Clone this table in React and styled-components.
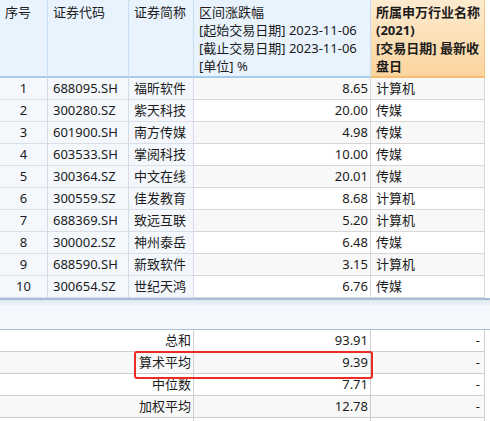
import React from 'react';
import styled, { createGlobalStyle, css } from 'styled-components';

const rows = [
  ['1', '688095.SH', '福昕软件', '8.65', '计算机'],
  ['2', '300280.SZ', '紫天科技', '20.00', '传媒'],
  ['3', '601900.SH', '南方传媒', '4.98', '传媒'],
  ['4', '603533.SH', '掌阅科技', '10.00', '传媒'],
  ['5', '300364.SZ', '中文在线', '20.01', '传媒'],
  ['6', '300559.SZ', '佳发教育', '8.68', '计算机'],
  ['7', '688369.SH', '致远互联', '5.20', '计算机'],
  ['8', '300002.SZ', '神州泰岳', '6.48', '传媒'],
  ['9', '688590.SH', '新致软件', '3.15', '计算机'],
  ['10', '300654.SZ', '世纪天鸿', '6.76', '传媒'],
];

const summary = [
  ['总和', '93.91'],
  ['算术平均', '9.39'],
  ['中位数', '7.71'],
  ['加权平均', '12.78'],
];

function App() {
  return (
    <Sheet>
      <Global />
      <HeadRow>
        <HeadCell>序号</HeadCell>
        <HeadCell>证券代码</HeadCell>
        <HeadCell>证券简称</HeadCell>
        <HeadCell>
          区间涨跌幅
          <br />[起始交易日期] 2023-11-06
          <br />[截止交易日期] 2023-11-06
          <br />[单位] %
        </HeadCell>
        <HeadCell $accent>
          所属申万行业名称
          <br />(2021)
          <br />[交易日期] 最新收
          <br />盘日
        </HeadCell>
      </HeadRow>
      {rows.map((r, i) => (
        <BodyRow key={r[0]}>
          <FixedCell $align="center">{r[0]}</FixedCell>
          <FixedCell>{r[1]}</FixedCell>
          <FixedCell>{r[2]}</FixedCell>
          <DataCell $align="right" $odd={i % 2 === 0}>{r[3]}</DataCell>
          <DataCell $odd={i % 2 === 0}>{r[4]}</DataCell>
        </BodyRow>
      ))}
      <Band />
      <SummaryWrap>
        {summary.map((s, i) => (
          <SumRow key={s[0]}>
            <SumCell $odd={i % 2 === 1}>{s[0]}</SumCell>
            <SumCell $odd={i % 2 === 1}>{s[1]}</SumCell>
            <SumCell $odd={i % 2 === 1} $dash>-</SumCell>
          </SumRow>
        ))}
        <SumRow>
          <SumCell />
          <SumCell />
          <SumCell />
        </SumRow>
        <Highlight />
      </SummaryWrap>
    </Sheet>
  );
}

const Global = createGlobalStyle`
  html, body {
    margin: 0;
    background: #ffffff;
    overflow: hidden;
  }
  body {
    font-family: "Noto Sans", "Noto Sans CJK SC", sans-serif;
    font-size: 13px;
    color: #1b1b1b;
  }
`;

const COLS = '48px 81px 65px 177px 114px';

const Sheet = styled.div`
  width: 490px;
  height: 421px;
  overflow: hidden;
`;

const HeadRow = styled.div`
  display: grid;
  grid-template-columns: ${COLS};
  height: 78px;
`;

const HeadCell = styled.div`
  padding: 3px 5px 0 5px;
  line-height: 18px;
  background: #e9f3fd;
  border-right: 1px solid #c6ddf3;
  border-bottom: 2px solid #a9cbec;
  white-space: nowrap;
  overflow: hidden;

  ${(p) =>
    p.$accent &&
    css`
      font-weight: 700;
      background: linear-gradient(#fdebd0, #fbd49e);
      border-right: 1px solid #f6c784;
      border-bottom: 2px solid #f7bd73;
    `}
`;

const BodyRow = styled.div`
  display: grid;
  grid-template-columns: ${COLS};
  height: 22px;
`;

const Cell = styled.div`
  line-height: 21px;
  padding: 0 5px;
  white-space: nowrap;
  text-align: ${(p) => p.$align || 'left'};
  border-right: 1px solid #d7d7d7;
  border-bottom: 1px solid #d7d7d7;
`;

const FixedCell = styled(Cell)`
  background: #f4f8fd;
  border-right-color: #d3dbe5;
  border-bottom-color: #dadfe5;
`;

const DataCell = styled(Cell)`
  background: ${(p) => (p.$odd ? '#f8f8f8' : '#ffffff')};
  padding-right: ${(p) => (p.$align === 'right' ? '2px' : '5px')};
`;

const Band = styled.div`
  height: 29px;
  border-top: 2px solid #a6bcd8;
  border-bottom: 1px solid #a9bfd9;
  background: linear-gradient(#dfe7f1 0, #edf2f8 5px, #f4f8fd 6px);
`;

const SummaryWrap = styled.div`
  position: relative;
`;

const SumRow = styled.div`
  display: grid;
  grid-template-columns: 194px 177px 114px;
  height: 22px;
`;

const SumCell = styled.div`
  line-height: 21px;
  text-align: right;
  padding-right: ${(p) => (p.$dash ? '4px' : '2px')};
  background: ${(p) => (p.$odd ? '#f8f8f8' : '#ffffff')};
  border-right: 1px solid #cfcfcf;
  border-bottom: 1px solid #cfcfcf;
  white-space: nowrap;
`;

const Highlight = styled.div`
  position: absolute;
  left: 134px;
  top: 21px;
  width: 235px;
  height: 24px;
  border: 2px solid #ec2b22;
  border-radius: 3px;
  pointer-events: none;
`;

export default App;
